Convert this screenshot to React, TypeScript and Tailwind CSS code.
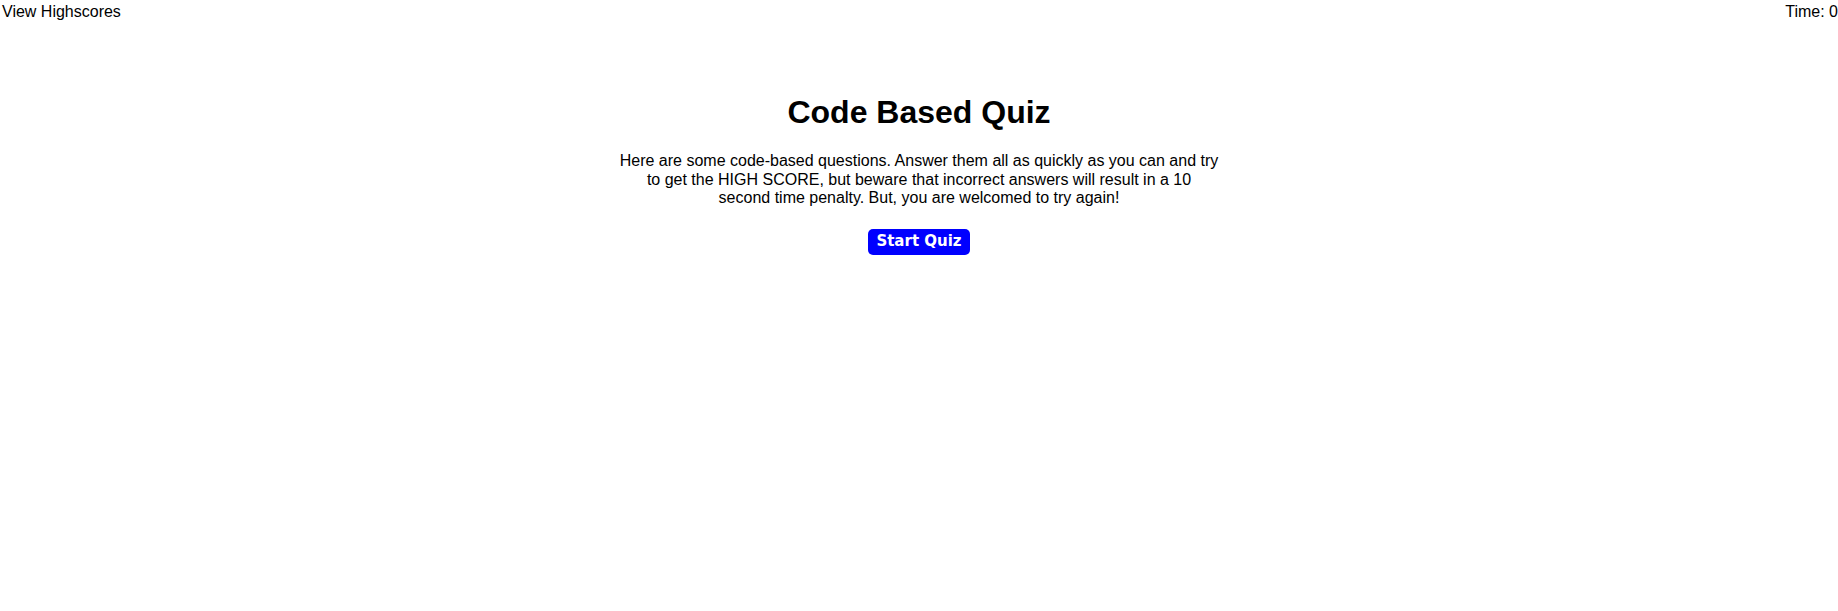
export default function App() {
  return (
    <div className="min-h-[611px] w-full overflow-hidden bg-white font-['Liberation_Sans',Arial,sans-serif] text-black">
      <header className="flex justify-between text-base leading-[18px]">
        <a className="ml-[2px] mt-[3px] cursor-pointer">View Highscores</a>
        <span className="mt-[3px]">Time: 0</span>
      </header>

      <main className="flex flex-col items-center text-center">
        <h1 className="mt-[73px] text-[32px] font-bold leading-[37px]">Code Based Quiz</h1>
        <p className="mt-[21px] max-w-[600px] text-base leading-[18.5px]">
          Here are some code-based questions. Answer them all as quickly as you can and try to get the HIGH SCORE, but
          beware that incorrect answers will result in a 10 second time penalty. But, you are welcomed to try again!
        </p>
        <button
          type="button"
          className="mt-[21px] h-[26px] rounded-[5px] bg-[#0000ff] px-[8px] font-['DejaVu_Sans',sans-serif] text-[15px] font-bold text-white"
        >
          Start Quiz
        </button>
      </main>
    </div>
  );
}
